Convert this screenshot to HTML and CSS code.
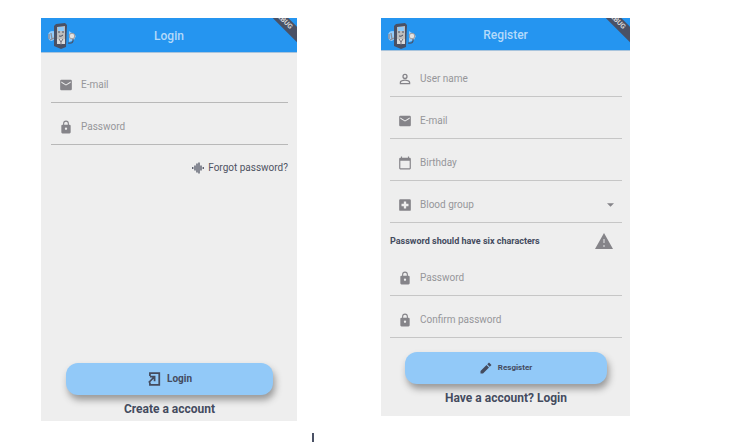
FILE: index.html
```html
<!DOCTYPE html>
<html lang="en">
<head>
<meta charset="utf-8">
<title>Login and Register</title>
<link rel="stylesheet" href="styles.css">
</head>
<body>
<svg class="defs" aria-hidden="true">
  <symbol id="mail" viewBox="0 0 24 24"><path d="M20 3H4a2 2 0 0 0-2 2v14a2 2 0 0 0 2 2h16a2 2 0 0 0 2-2V5a2 2 0 0 0-2-2zm0 5-8 5-8-5V6l8 5 8-5z"/></symbol>
  <symbol id="lock" viewBox="0 0 24 24"><path d="M18 8h-1V6A5 5 0 0 0 7 6v2H6a2 2 0 0 0-2 2v11a2 2 0 0 0 2 2h12a2 2 0 0 0 2-2V10a2 2 0 0 0-2-2zm-6 9a2 2 0 1 1 0-4 2 2 0 0 1 0 4zm3.1-9H8.900V6a3.100 3.100 0 0 1 6.200 0z"/></symbol>
  <symbol id="person" viewBox="0 0 24 24"><path fill-rule="evenodd" d="M12 3a4.500 4.500 0 1 0 0 9 4.500 4.500 0 0 0 0-9zm0 2.200a2.300 2.300 0 1 1 0 4.600 2.300 2.300 0 0 1 0-4.600zM12 13c-3 0-9 1.500-9 4.800V21h18v-3.200C21 14.500 15 13 12 13zm0 2.200c3 0 6.800 1.400 6.800 2.600v1H5.200v-1c0-1.200 3.800-2.600 6.800-2.600z"/></symbol>
  <symbol id="calendar" viewBox="0 0 24 24"><path fill-rule="evenodd" d="M20 3h-1V1h-2v2H7V1H5v2H4a2 2 0 0 0-2 2v16a2 2 0 0 0 2 2h16a2 2 0 0 0 2-2V5a2 2 0 0 0-2-2zm0 18H4V8h16z"/></symbol>
  <symbol id="medical" viewBox="0 0 24 24"><path fill-rule="evenodd" d="M20 2H4a2 2 0 0 0-2 2v16a2 2 0 0 0 2 2h16a2 2 0 0 0 2-2V4a2 2 0 0 0-2-2zm-2 12h-4v4h-4v-4H6v-4h4V6h4v4h4z"/></symbol>
  <symbol id="logo" viewBox="0 0 30 26">
    <path d="M6 8Q1 8 1 13q0 5 4 5l4-3V9z" fill="#90caf9"/>
    <path d="M2 11v5M4 10l1 6M3 17l4-2" stroke="#8b8a92" stroke-width="1.300" fill="none"/>
    <path d="M22 8l3 2 4 3-2 4-5 2z" fill="#90caf9"/>
    <path d="M21 20q6 1 5-4" stroke="#4a5165" stroke-width="1.200" fill="none"/>
    <circle cx="25" cy="13" r="2.800" fill="#e3e3e3" stroke="#a09a9c"/>
    <path d="M9 1l9-1 2 2-1 22-5 2-7-3V3z" fill="#4a5165"/>
    <path d="M10 4l8-1v15l-8 1z" fill="#bdbdbd"/>
    <path d="M11 4h6v4h-6z" fill="#90caf9"/>
    <path d="M11 9h2M15 9h2M12 13q2 1 4-1" stroke="#4a5165" fill="none"/>
    <path d="M10 16h8v5h-8z" fill="#dadada"/>
    <path d="M12 16l2 3 2-3M14 19v3" stroke="#71717c" fill="none"/>
  </symbol>
</svg>
<main class="screens">
  <section class="phone" id="login">
    <header class="bar">
      <svg class="logo" aria-hidden="true"><use href="#logo"/></svg>
      <h1>Login</h1>
      <span class="ribbon" aria-hidden="true">DEBUG</span>
    </header>
    <form class="form">
      <label class="field"><svg class="icon" aria-hidden="true"><use href="#mail"/></svg><input type="email" placeholder="E-mail" aria-label="E-mail"></label>
      <label class="field"><svg class="icon" aria-hidden="true"><use href="#lock"/></svg><input type="password" placeholder="Password" aria-label="Password"></label>
      <a class="forgot" href="#forgot"><svg class="icon icon-small" viewBox="0 0 24 24" aria-hidden="true"><path d="M1.500 10v4M6 7v10M10 3v18M14 1v22M18 7v10M22.500 10v4" stroke="currentColor" stroke-width="2.600"/></svg>Forgot password?</a>
      <button class="action" type="button"><svg class="icon" viewBox="0 0 24 24" aria-hidden="true"><path d="M5 7V2h16v20H5v-4M3 18 13 8M5 8h8v8" fill="none" stroke="currentColor" stroke-width="3"/></svg>Login</button>
      <a class="switch" href="#register">Create a account</a>
    </form>
  </section>
  <section class="phone phone-register" id="register">
    <header class="bar">
      <svg class="logo" aria-hidden="true"><use href="#logo"/></svg>
      <h1>Register</h1>
      <span class="ribbon" aria-hidden="true">DEBUG</span>
    </header>
    <form class="form">
      <label class="field"><svg class="icon" aria-hidden="true"><use href="#person"/></svg><input type="text" placeholder="User name" aria-label="User name"></label>
      <label class="field"><svg class="icon" aria-hidden="true"><use href="#mail"/></svg><input type="email" placeholder="E-mail" aria-label="E-mail"></label>
      <label class="field"><svg class="icon" aria-hidden="true"><use href="#calendar"/></svg><input type="text" placeholder="Birthday" aria-label="Birthday"></label>
      <label class="field"><svg class="icon" aria-hidden="true"><use href="#medical"/></svg><select aria-label="Blood group"><option>Blood group</option></select><svg class="caret" viewBox="0 0 8 4" aria-hidden="true"><path d="M0 0h8L4 4z"/></svg></label>
      <p class="hint">Password should have six characters<svg viewBox="0 0 18 16" aria-hidden="true"><path d="M9 0 18 16H0z"/><path class="mark" d="M8 6h2v4H8zM8 12h2v2H8z"/></svg></p>
      <label class="field"><svg class="icon" aria-hidden="true"><use href="#lock"/></svg><input type="password" placeholder="Password" aria-label="Password"></label>
      <label class="field"><svg class="icon" aria-hidden="true"><use href="#lock"/></svg><input type="password" placeholder="Confirm password" aria-label="Confirm password"></label>
      <button class="action" type="button"><svg class="icon icon-small" viewBox="0 0 24 24" aria-hidden="true"><path d="M1 18v5h5L18 11l-5-5zM14.500 4.500l5 5L23 6l-5-5z"/></svg>Resgister</button>
      <a class="switch" href="#login">Have a account? Login</a>
    </form>
  </section>
</main>
<div class="divider"></div>
</body>
</html>
```
FILE: styles.css
```css
* { box-sizing: border-box; }

body {
  margin: 0;
  background: #fff;
  color: #444b5e;
  font-family: Roboto, "Liberation Sans", sans-serif;
  font-size: 10px;
  line-height: 16px;
}

.defs { display: block; width: 0; height: 0; }

.screens {
  display: grid;
  grid-template-columns: 256fr 249fr;
  align-items: start;
  gap: 84px;
  padding: 18px 118px 0 41px;
}

.phone { background: #eee; }

.bar {
  position: relative;
  display: grid;
  place-items: center;
  height: 35px;
  padding-top: 2px;
  background: #2595f0;
  border-bottom: 1px solid #a9c4dc;
  overflow: hidden;
}

.bar h1 {
  margin: 0;
  color: #b4dafa;
  font-size: 12px;
  font-weight: 500;
}

.logo {
  position: absolute;
  top: 5px;
  left: 6px;
  width: 30px;
  height: 26px;
}

.ribbon {
  position: absolute;
  top: -3px;
  right: -16px;
  width: 60px;
  height: 11px;
  background: #4a5165;
  color: #d5d5d5;
  font-size: 7px;
  font-weight: 700;
  line-height: 11px;
  text-align: center;
  transform: rotate(45deg);
}

.form {
  display: flex;
  flex-direction: column;
  padding: 8px 9px 4px 10px;
}

.field {
  display: flex;
  align-items: center;
  gap: 8px;
  height: 42px;
  padding: 7px 8px 0;
  border-bottom: 1px solid #b8b8b8;
  color: #858489;
}

.icon {
  flex: none;
  width: 14px;
  height: 14px;
  fill: currentColor;
}

.icon-small { width: 12px; height: 12px; }

.field input,
.field select {
  flex: 1;
  min-width: 0;
  padding: 0;
  border: 0;
  outline: 0;
  appearance: none;
  background: none;
  color: #96969a;
  font: inherit;
}

.field input::placeholder { color: #96969a; opacity: 1; }

.caret { width: 7px; height: 4px; fill: currentColor; }

.forgot {
  display: flex;
  align-items: center;
  align-self: flex-end;
  gap: 4px;
  margin-top: 15px;
  color: #4f5363;
  text-decoration: none;
}

.action {
  display: flex;
  align-items: center;
  justify-content: center;
  gap: 6px;
  height: 32px;
  margin: 187px 15px 0;
  padding: 0;
  border: 0;
  border-radius: 12px;
  background: #92c9f8;
  box-shadow: 2px 5px 7px #999;
  color: #444b5e;
  font: 700 10px/16px Roboto, "Liberation Sans", sans-serif;
}

.switch {
  align-self: center;
  margin-top: 6px;
  color: #444b5e;
  font-size: 12px;
  font-weight: 700;
  text-decoration: none;
}

.hint {
  display: flex;
  align-items: center;
  justify-content: space-between;
  height: 32px;
  margin: 2px 9px 0 0;
  font-size: 9px;
  font-weight: 700;
}

.hint svg { width: 18px; height: 16px; fill: #858489; }
.hint .mark { fill: #b5b5b8; }

.phone-register .bar { height: 33px; }
.phone-register .form { padding: 4px 8px 10px 9px; }
.phone-register .field { border-color: #c6c6c6; }
.phone-register .hint + .field { margin-top: -3px; }
.phone-register .action { margin-top: 14px; font-size: 8px; }

.divider {
  width: 2px;
  height: 9px;
  margin: 12px 0 0 312px;
  background: #4a5165;
}
```
